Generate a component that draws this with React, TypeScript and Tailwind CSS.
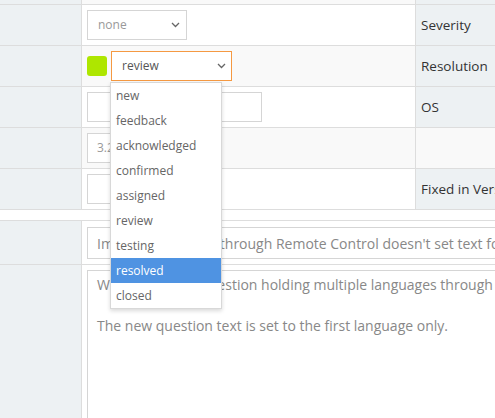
import React from "react";

const statuses = ["new", "feedback", "acknowledged", "confirmed", "assigned", "review", "testing", "resolved", "closed"];

function Chevron() {
  return (
    <svg width="9" height="6" viewBox="0 0 9 6" className="shrink-0">
      <path d="M1 1l3.5 3.5L8 1" fill="none" stroke="#666" strokeWidth="1.3" />
    </svg>
  );
}

function Row({ alt, label, lightLabel, children }: { alt?: boolean; label?: string; lightLabel?: boolean; children?: React.ReactNode }) {
  return (
    <div className="flex h-[41px] border-b border-[#dddddd]">
      <div className="w-[82px] shrink-0 border-r border-[#dddddd] bg-[#edf1f3]" />
      <div className={`w-[334px] shrink-0 border-r border-[#dddddd] flex items-center gap-[4px] pl-[5px] ${alt ? "bg-[#f9f9f9]" : "bg-white"}`}>
        {children}
      </div>
      <div className={`flex-1 flex items-center pl-[5px] text-[13.5px] text-[#333] whitespace-nowrap ${lightLabel ? "bg-[#f9f9f9]" : "bg-[#edf1f3]"}`}>
        {label}
      </div>
    </div>
  );
}

export default function App() {
  return (
    <div className="relative w-[495px] h-[418px] overflow-hidden bg-white font-['Open_Sans',sans-serif]">
      {/* partial row above */}
      <div className="flex h-[5px] border-b border-[#dddddd]">
        <div className="w-[82px] border-r border-[#dddddd] bg-[#edf1f3]" />
        <div className="w-[334px] border-r border-[#dddddd] bg-[#f9f9f9]" />
        <div className="flex-1 bg-[#edf1f3]" />
      </div>

      <Row label="Severity">
        <div className="w-[100px] h-[30px] border border-[#d5d5d5] bg-white flex items-center justify-between pl-[10px] pr-[6px] text-[12px] text-[#999]">
          none
          <Chevron />
        </div>
      </Row>

      <Row alt label="Resolution">
        <div className="w-[20px] h-[20px] rounded-[3px] bg-[#aee600]" />
        <div className="w-[121px] h-[30px] border border-[#f59942] bg-white flex items-center justify-between pl-[10px] pr-[5px] text-[12px] text-[#555]">
          review
          <Chevron />
        </div>
      </Row>

      <Row label="OS">
        <div className="w-[175px] h-[30px] border border-[#d5d5d5] bg-white" />
      </Row>

      <Row alt lightLabel>
        <div className="w-[110px] h-[30px] border border-[#d5d5d5] bg-white flex items-center pl-[9px] text-[12px] text-[#999]">
          3.2.0
        </div>
      </Row>

      <Row label="Fixed in Version">
        <div className="w-[110px] h-[30px] border border-[#d5d5d5] bg-white" />
      </Row>

      <div className="h-[11px] border-b border-[#dddddd] bg-white" />

      <div className="flex h-[44px] border-b border-[#dddddd]">
        <div className="w-[82px] shrink-0 border-r border-[#dddddd] bg-[#edf1f3]" />
        <div className="flex-1 pl-[5px] pt-[6px] bg-white">
          <div className="w-[600px] h-[32px] border border-[#d5d5d5] flex items-center pl-[9px] text-[14px] text-[#888] whitespace-nowrap">
            Import a Question through Remote Control doesn't set text for all languages
          </div>
        </div>
      </div>

      <div className="flex h-[200px]">
        <div className="w-[82px] shrink-0 border-r border-[#dddddd] bg-[#edf1f3]" />
        <div className="flex-1 pl-[5px] pt-[5px] bg-white">
          <div className="w-[600px] h-[200px] border border-[#d5d5d5] pl-[9px] pt-[4px] text-[14px] leading-[20.5px] text-[#888] whitespace-nowrap">
            <p>When setting a Question holding multiple languages through Remote Control</p>
            <p>&nbsp;</p>
            <p>The new question text is set to the first language only.</p>
          </div>
        </div>
      </div>

      {/* open dropdown list */}
      <div className="absolute left-[110px] top-[82px] w-[112px] border border-[#d8d8d8] bg-white shadow-[0_2px_4px_rgba(0,0,0,0.15)]">
        {statuses.map((s) => (
          <div
            key={s}
            className={`h-[25px] flex items-center pl-[5px] text-[12px] ${s === "resolved" ? "bg-[#4f93e2] text-white" : "text-[#666]"}`}
          >
            {s}
          </div>
        ))}
      </div>
    </div>
  );
}
